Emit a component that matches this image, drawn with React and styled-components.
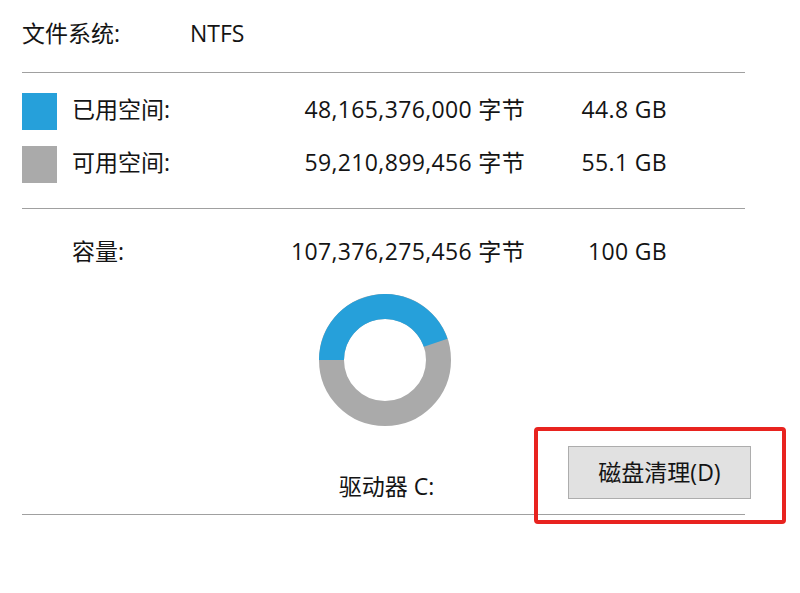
import React from "react";
import styled, { createGlobalStyle } from "styled-components";

const Global = createGlobalStyle`
  html, body { margin: 0; padding: 0; background: #ffffff; }
  body {
    font-family: "Open Sans", "Noto Sans CJK SC", sans-serif;
    color: #141414;
    width: 800px;
    height: 593px;
    overflow: hidden;
  }
`;

const Page = styled.div`
  width: 729px;
  padding: 18px 0 0 22px;
  font-size: 23px;
  line-height: 30px;
`;

const FsRow = styled.div`
  display: grid;
  grid-template-columns: 168px auto;
  align-items: center;
  height: 30px;
`;

const Rule = styled.hr`
  width: 723px;
  margin: ${(p) => p.$m || "0"};
  border: none;
  border-top: 1px solid #a0a0a0;
  height: 0;
`;

const DataGrid = styled.div`
  display: grid;
  grid-template-columns: 50px 180px 273px 142px;
  grid-auto-rows: 37px;
  row-gap: 16px;
  align-items: center;
`;

const Swatch = styled.span`
  width: 35px;
  height: 37px;
  background: ${(p) => p.$color};
`;

const Label = styled.span`
  white-space: nowrap;
  padding-bottom: ${(p) => p.$lift || 0}px;
`;

const Num = styled.span`
  justify-self: end;
  white-space: nowrap;
  padding-bottom: 6px;
  letter-spacing: 0.35px;
`;

const ChartBox = styled.div`
  display: flex;
  justify-content: center;
  margin-top: 22px;
  width: 726px;
`;

const DriveRow = styled.div`
  display: grid;
  grid-template-columns: 1fr auto 1fr;
  align-items: end;
  margin-top: 20px;
`;

const DriveLabel = styled.span`
  grid-column: 2;
  line-height: 24px;
  padding-bottom: 1px;
`;

const ButtonWrap = styled.div`
  grid-column: 3;
  justify-self: end;
  position: relative;
`;

const Button = styled.button`
  width: 183px;
  height: 53px;
  background: #e1e1e1;
  border: 1px solid #adadad;
  font-family: inherit;
  font-size: 23px;
  color: #141414;
  padding: 0 0 4px;
`;

const Highlight = styled.div`
  position: absolute;
  inset: -19px -35px -25px -34px;
  border: 4px solid #e8231f;
  border-radius: 4px;
  pointer-events: none;
`;

function Donut() {
  const cx = 66, cy = 66, R = 66, r = 41;
  const used = 0.448;
  const a0 = Math.PI;
  const a1 = Math.PI - used * 2 * Math.PI;
  const pt = (rad, ang) => [cx + rad * Math.cos(ang), cy - rad * Math.sin(ang)];
  const [x0, y0] = pt(R, a0);
  const [x1, y1] = pt(R, a1);
  const [ix1, iy1] = pt(r, a1);
  const [ix0, iy0] = pt(r, a0);
  const blue = `M${x0} ${y0} A${R} ${R} 0 0 1 ${x1} ${y1} L${ix1} ${iy1} A${r} ${r} 0 0 0 ${ix0} ${iy0} Z`;
  return (
    <svg width="132" height="132" viewBox="0 0 132 132">
      <circle cx={cx} cy={cy} r={(R + r) / 2} fill="none" stroke="#aaaaaa" strokeWidth={R - r} />
      <path d={blue} fill="#26a0da" />
    </svg>
  );
}

export default function App() {
  return (
    <>
      <Global />
      <Page>
        <FsRow>
          <Label $lift={6}>文件系统:</Label>
          <Label $lift={6}>NTFS</Label>
        </FsRow>
        <Rule $m="24px 0 20px" />
        <DataGrid>
          <Swatch $color="#26a0da" />
          <Label $lift={6}>已用空间:</Label>
          <Num>48,165,376,000 字节</Num>
          <Num>44.8 GB</Num>
          <Swatch $color="#aaaaaa" />
          <Label $lift={6}>可用空间:</Label>
          <Num>59,210,899,456 字节</Num>
          <Num>55.1 GB</Num>
        </DataGrid>
        <Rule $m="25px 0 26px" />
        <DataGrid>
          <span />
          <Label $lift={6}>容量:</Label>
          <Num>107,376,275,456 字节</Num>
          <Num>100 GB</Num>
        </DataGrid>
        <ChartBox>
          <Donut />
        </ChartBox>
        <DriveRow>
          <DriveLabel>驱动器 C:</DriveLabel>
          <ButtonWrap>
            <Button>磁盘清理(D)</Button>
            <Highlight />
          </ButtonWrap>
        </DriveRow>
        <Rule $m="15px 0 0" />
      </Page>
    </>
  );
}
